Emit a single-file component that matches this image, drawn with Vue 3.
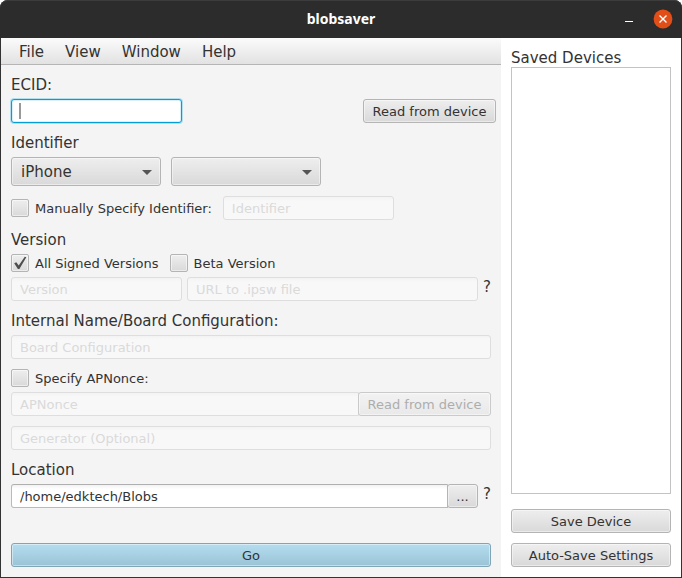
<script setup>
import { ref } from 'vue'

const menus = ['File', 'View', 'Window', 'Help']
const ecid = ref('')
const deviceType = ref('iPhone')
const deviceModel = ref('')
const manualIdentifier = ref(false)
const identifier = ref('')
const allSigned = ref(true)
const beta = ref(false)
const version = ref('')
const ipswUrl = ref('')
const board = ref('')
const specifyNonce = ref(false)
const nonce = ref('')
const generator = ref('')
const location = ref('/home/edktech/Blobs')
</script>

<template>
  <div class="window">
    <header class="titlebar">
      <h1 class="title">blobsaver</h1>
      <div class="controls">
        <button class="control" type="button" aria-label="Minimize">
          <svg width="20" height="20" viewBox="0 0 20 20"><path d="M6 12.5h8" stroke="#fff" fill="none" /></svg>
        </button>
        <button class="control" type="button" aria-label="Close">
          <svg width="20" height="20" viewBox="0 0 20 20">
            <circle cx="10" cy="10" r="9.4" fill="#e24e18" />
            <path d="M6.5 6.5l7 7M13.5 6.5l-7 7" stroke="#fff" stroke-width="1.4" fill="none" />
          </svg>
        </button>
      </div>
    </header>

    <div class="body">
      <div class="main">
        <nav class="menubar">
          <button v-for="m in menus" :key="m" class="menu" type="button">{{ m }}</button>
        </nav>

        <form class="form" @submit.prevent>
          <section class="group">
            <label class="heading" for="ecid">ECID:</label>
            <div class="row spread">
              <span class="focus-field">
                <input id="ecid" v-model="ecid" class="field short focused" type="text" />
                <span v-if="!ecid" class="caret"></span>
              </span>
              <button class="btn read" type="button">Read from device</button>
            </div>
          </section>

          <section class="group">
            <label class="heading" for="type">Identifier</label>
            <div class="row wide-gap">
              <span class="combo">
                <select id="type" v-model="deviceType">
                  <option>iPhone</option>
                  <option>iPad</option>
                  <option>iPod</option>
                </select>
              </span>
              <span class="combo">
                <select v-model="deviceModel" aria-label="Device model">
                  <option value=""></option>
                </select>
              </span>
            </div>
          </section>

          <div class="row check-row">
            <label class="check"><input v-model="manualIdentifier" type="checkbox" /><span class="box"></span><span class="check-text">Manually Specify Identifier:</span></label>
            <input v-model="identifier" class="field short" type="text" placeholder="Identifier" aria-label="Identifier" :disabled="!manualIdentifier" />
          </div>

          <section class="group">
            <h2 class="heading">Version</h2>
            <div class="row check-row">
              <label class="check">
                <input v-model="allSigned" type="checkbox" /><span class="box"><svg v-if="allSigned" width="16" height="16" viewBox="0 0 16 16"><path d="M2.2 8.2L4.3 7.2L6.7 10.4L12.8 1.8L14.3 2.3L7.4 14H5.9Z" fill="#4d4d4d" /></svg></span><span class="check-text">All Signed Versions</span>
              </label>
              <label class="check"><input v-model="beta" type="checkbox" /><span class="box"></span><span class="check-text">Beta Version</span></label>
            </div>
            <div class="row">
              <input v-model="version" class="field short" type="text" placeholder="Version" aria-label="Version" :disabled="allSigned" />
              <input v-model="ipswUrl" class="field grow" type="text" placeholder="URL to .ipsw file" aria-label="URL to .ipsw file" :disabled="!beta" />
              <button class="help" type="button">?</button>
            </div>
          </section>

          <section class="group">
            <label class="heading" for="board">Internal Name/Board Configuration:</label>
            <input id="board" v-model="board" class="field" type="text" placeholder="Board Configuration" disabled />
          </section>

          <section class="group">
            <label class="check"><input v-model="specifyNonce" type="checkbox" /><span class="box"></span><span class="check-text">Specify APNonce:</span></label>
            <div class="joined">
              <input v-model="nonce" class="field grow" type="text" placeholder="APNonce" aria-label="APNonce" :disabled="!specifyNonce" />
              <button class="btn read" type="button" :disabled="!specifyNonce">Read from device</button>
            </div>
          </section>

          <input v-model="generator" class="field" type="text" placeholder="Generator (Optional)" aria-label="Generator" :disabled="!specifyNonce" />

          <section class="group">
            <label class="heading" for="location">Location</label>
            <div class="row">
              <div class="joined grow">
                <input id="location" v-model="location" class="field grow" type="text" />
                <button class="btn browse" type="button">...</button>
              </div>
              <button class="help" type="button">?</button>
            </div>
          </section>

          <button class="btn go" type="submit">Go</button>
        </form>
      </div>

      <aside class="side">
        <h2 class="heading">Saved Devices</h2>
        <ul class="devices" aria-label="Saved Devices"></ul>
        <div class="side-actions">
          <button class="btn" type="button">Save Device</button>
          <button class="btn" type="button">Auto-Save Settings</button>
        </div>
      </aside>
    </div>
  </div>
</template>

<style>
body {
  background: #fff;
}
</style>

<style scoped>
* {
  box-sizing: border-box;
  margin: 0;
}
.window {
  display: flex;
  flex-direction: column;
  min-height: 100vh;
  border: 1px solid #333;
  border-top: 0;
  border-radius: 8px 8px 0 0;
  background: #f4f4f4;
  color: #333;
  font: 13px/16px "DejaVu Sans", sans-serif;
}
button,
input,
select {
  font: inherit;
  color: inherit;
}
.titlebar {
  display: grid;
  grid-template-columns: 1fr auto 1fr;
  align-items: center;
  height: 38px;
  padding: 0 9px;
  margin: 0 -1px;
  border-radius: 8px 8px 0 0;
  background: #2c2c2c;
  box-shadow: inset 0 1px #3c3c3c;
}
.title {
  grid-column: 2;
  color: #fff;
  font: bold 14px/20px "Noto Sans", sans-serif;
}
.controls {
  display: flex;
  justify-content: flex-end;
  gap: 14px;
}
.control {
  display: flex;
  padding: 0;
  border: 0;
  background: none;
}
.body {
  display: flex;
  flex: 1;
}
.main {
  display: flex;
  flex: 1;
  flex-direction: column;
  min-width: 0;
}
.menubar {
  display: flex;
  gap: 1px;
  height: 27px;
  padding: 0 8px;
  border-bottom: 1px solid #b5b5b5;
  background: linear-gradient(#fbfbfb, #e2e2e2);
}
.menu {
  padding: 2px 10px 0;
  border: 0;
  background: none;
  font-size: 15px;
}
.form {
  display: flex;
  flex: 1;
  flex-direction: column;
  gap: 10px;
  padding: 10px;
}
.group {
  display: flex;
  flex-direction: column;
  gap: 5px;
}
.heading {
  height: 19px;
  font-size: 15px;
  font-weight: normal;
  line-height: 21px;
}
.row {
  display: flex;
  align-items: flex-start;
  gap: 5px;
}
.wide-gap {
  gap: 10px;
}
.check-row {
  align-items: center;
  gap: 11px;
}
.spread {
  justify-content: space-between;
  margin-right: -5px;
}
.grow {
  flex: 1;
  min-width: 0;
}
.field {
  height: 24px;
  padding: 0 8px;
  border: 1px solid #bababa;
  border-top-color: #b0b0b0;
  border-radius: 3px;
  outline: 0;
  background: linear-gradient(#f2f2f2, #fff 4px);
}
.field::placeholder {
  color: #dadada;
  opacity: 1;
}
.field:disabled {
  border-color: #dedede;
  background: linear-gradient(#f3f3f3, #f8f8f8 4px);
}
.short {
  width: 171px;
}
.focus-field {
  position: relative;
  display: flex;
}
.focused {
  border-color: #039ed3;
  background: #fff;
  box-shadow: 0 0 0 1px #b4dfef, inset 0 0 0 1px #d9f0f8;
  caret-color: transparent;
}
.caret {
  position: absolute;
  top: 4px;
  left: 8px;
  width: 2px;
  height: 16px;
  background: #999;
}
.btn {
  height: 24px;
  padding: 2px 8px 0;
  border: 1px solid #b4b4b4;
  border-radius: 3px;
  background: linear-gradient(#eee, #d9d9d9);
  box-shadow: inset 0 0 0 1px rgba(255, 255, 255, 0.45);
  white-space: nowrap;
}
.btn:disabled {
  border-color: #cacaca;
  background: linear-gradient(#f2f2f2, #e9e9e9);
  color: #adadad;
}
.read {
  min-width: 133px;
}
.browse {
  min-width: 31px;
}
.joined {
  display: flex;
}
.joined .field {
  margin-right: -1px;
  border-radius: 3px 0 0 3px;
}
.joined .btn {
  position: relative;
}
.help {
  height: 19px;
  padding: 0;
  border: 0;
  background: none;
  font-size: 15px;
  line-height: 21px;
}
.combo {
  position: relative;
  width: 150px;
}
.combo select {
  display: block;
  width: 100%;
  height: 29px;
  padding: 0 24px 0 9px;
  border: 1px solid #b4b4b4;
  border-radius: 3px;
  appearance: none;
  background: linear-gradient(#eee, #d9d9d9);
  box-shadow: inset 0 0 0 1px rgba(255, 255, 255, 0.45);
  font-size: 15px;
}
.combo::after {
  content: "";
  position: absolute;
  top: 13px;
  right: 9px;
  border: solid transparent;
  border-width: 5px 5px 0;
  border-top-color: #555;
  pointer-events: none;
}
.check {
  display: flex;
  align-items: center;
  gap: 6px;
  height: 18px;
}
.check input {
  position: absolute;
  opacity: 0;
}
.check-text {
  padding-top: 2px;
}
.box {
  display: flex;
  width: 18px;
  height: 18px;
  border: 1px solid #b4b4b4;
  border-radius: 2px;
  background: linear-gradient(#eee, #d9d9d9);
  box-shadow: inset 0 0 0 1px rgba(255, 255, 255, 0.5);
}
.go {
  margin-top: auto;
  border-color: #7fa5b7;
  background: linear-gradient(#b4ddf0, #9ac3d6);
}
.side {
  display: flex;
  flex-direction: column;
  width: 180px;
  padding: 10px;
  background: #fff;
}
.devices {
  flex: 1;
  padding: 0;
  border: 1px solid #c3c3c3;
  list-style: none;
}
.side-actions {
  display: flex;
  flex-direction: column;
  gap: 10px;
  padding-top: 15px;
}
</style>
